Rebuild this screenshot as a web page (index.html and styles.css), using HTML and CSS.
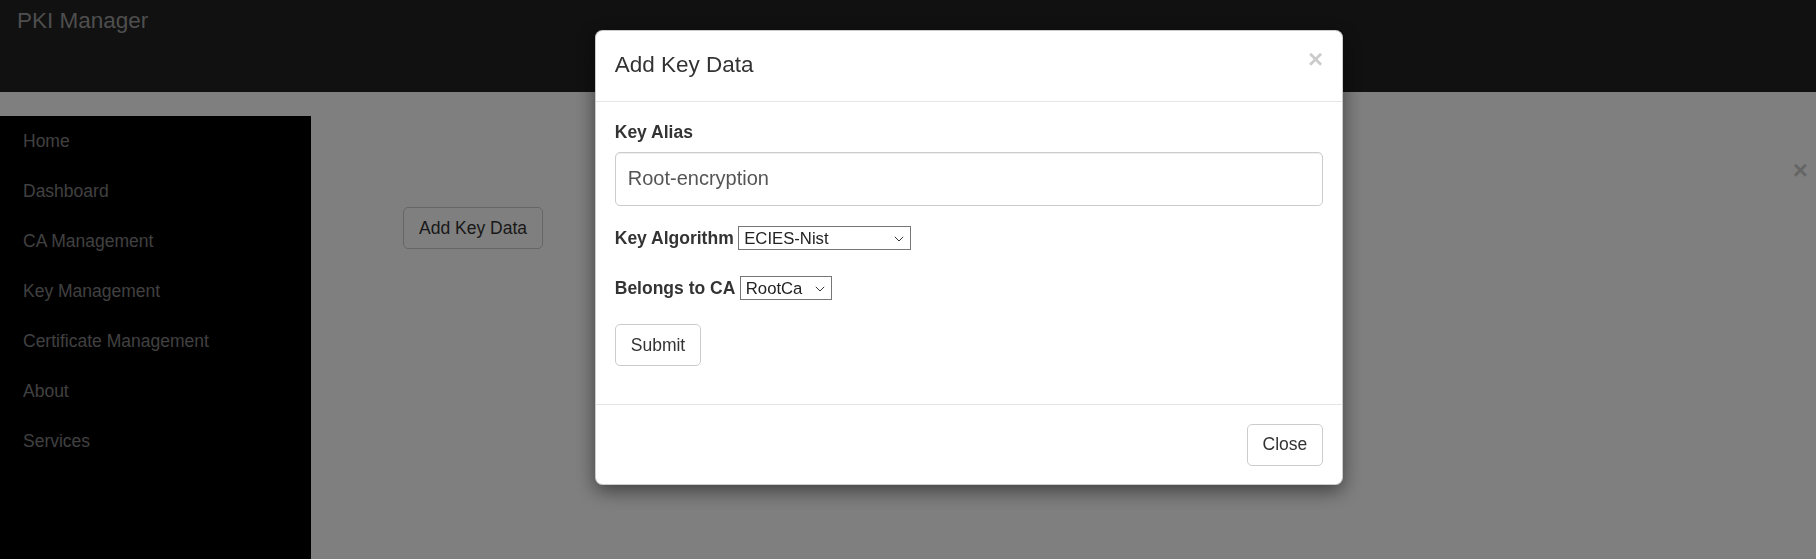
FILE: index.html
```html
<!DOCTYPE html>
<html lang="en">
<head>
<meta charset="utf-8">
<title>PKI Manager</title>
<link rel="stylesheet" href="styles.css">
</head>
<body>
<header class="navbar">
  <span class="brand">PKI Manager</span>
</header>
<div class="layout">
  <nav class="sidenav">
    <a href="#">Home</a>
    <a href="#">Dashboard</a>
    <a href="#">CA Management</a>
    <a href="#">Key Management</a>
    <a href="#">Certificate Management</a>
    <a href="#">About</a>
    <a href="#">Services</a>
  </nav>
  <main class="main">
    <button class="btn page-btn" type="button">Add Key Data</button>
    <span class="close page-close">&times;</span>
  </main>
</div>

<div class="backdrop"></div>

<div class="modal">
  <div class="modal-header">
    <h4 class="modal-title">Add Key Data</h4>
    <span class="close">&times;</span>
  </div>
  <div class="modal-body">
    <form>
      <div class="form-group">
        <label class="block-label">Key Alias</label>
        <input class="form-control" type="text" value="Root-encryption">
      </div>
      <div class="form-group inline-group">
        <label>Key Algorithm</label>
        <span class="sel-wrap sel-alg">
          <select class="sel"><option>ECIES-Nist</option><option>RSA</option></select>
          <svg class="chev" width="10" height="6" viewBox="0 0 10 6"><path d="M0.8 0.8 L5 5 L9.2 0.8" fill="none" stroke="#333" stroke-width="1"/></svg>
        </span>
      </div>
      <div class="form-group inline-group">
        <label>Belongs to CA</label>
        <span class="sel-wrap sel-ca">
          <select class="sel"><option>RootCa</option></select>
          <svg class="chev" width="10" height="6" viewBox="0 0 10 6"><path d="M0.8 0.8 L5 5 L9.2 0.8" fill="none" stroke="#333" stroke-width="1"/></svg>
        </span>
      </div>
      <div class="form-group">
        <button class="btn" type="button">Submit</button>
      </div>
    </form>
  </div>
  <div class="modal-footer">
    <button class="btn" type="button">Close</button>
  </div>
</div>
</body>
</html>
```
FILE: styles.css
```css
html, body {
  margin: 0;
  padding: 0;
  height: 100%;
}
body {
  font-family: "Liberation Sans", Arial, sans-serif;
  font-size: 17.5px;
  line-height: 25px;
  color: #333;
  background: #fff;
  overflow: hidden;
}
.navbar {
  height: 92px;
  background: #222;
  box-sizing: border-box;
}
.brand {
  display: block;
  padding: 8px 17px;
  font-size: 22.5px;
  line-height: 25px;
  color: #9d9d9d;
}
.layout {
  display: flex;
  margin-top: 24px;
  height: calc(100% - 116px);
}
.sidenav {
  width: 311px;
  background: #000;
  display: flex;
  flex-direction: column;
}
.sidenav a {
  display: block;
  padding: 12.5px 23px;
  color: #818181;
  text-decoration: none;
  font-size: 17.5px;
  line-height: 25px;
}
.main {
  flex: 1;
  position: relative;
}
.btn {
  font-family: inherit;
  font-size: 17.5px;
  line-height: 25px;
  padding: 7.5px 15px;
  background: #fff;
  color: #333;
  border: 1px solid #ccc;
  border-radius: 5px;
  cursor: pointer;
}
.page-btn {
  margin-left: 92px;
  margin-top: 91px;
}
.close {
  font-size: 26px;
  font-weight: bold;
  line-height: 1;
  color: #000;
  opacity: 0.2;
  text-shadow: 0 1px 0 #fff;
}
.page-close {
  position: absolute;
  right: 8px;
  top: 41px;
}
.backdrop {
  position: fixed;
  inset: 0;
  background: #000;
  opacity: 0.5;
}
.modal {
  position: fixed;
  left: 595px;
  top: 30px;
  width: 748px;
  background: #fff;
  border: 1px solid rgba(0,0,0,.2);
  border-radius: 7.5px;
  box-shadow: 0 6px 19px rgba(0,0,0,.5);
  box-sizing: border-box;
}
.modal-header {
  display: flex;
  justify-content: space-between;
  align-items: flex-start;
  padding: 18.75px 18.75px;
  border-bottom: 1px solid #e5e5e5;
}
.modal-title {
  margin: 0;
  font-size: 22.5px;
  font-weight: 500;
  line-height: 32px;
  position: relative;
  top: -1px;
}
.modal-header .close {
  margin-top: -4px;
  margin-right: 0;
}
.modal-body {
  padding: 18.75px;
}
.modal-body form {
  margin: 0;
}
.form-group {
  margin-bottom: 18.75px;
}
label {
  font-weight: bold;
}
.block-label {
  display: block;
  margin-bottom: 6.25px;
}
.form-control {
  display: block;
  width: 100%;
  box-sizing: border-box;
  height: 54px;
  padding: 0 12px;
  font-family: inherit;
  font-size: 20px;
  color: #555;
  border: 1px solid #ccc;
  border-radius: 5px;
  box-shadow: inset 0 1px 1px rgba(0,0,0,.075);
  outline: none;
}
.inline-group {
  height: 29.25px;
  padding-top: 2px;
  display: flex;
  align-items: flex-start;
}
.inline-group label {
  margin-right: 4.5px;
}
.sel-wrap {
  position: relative;
  display: inline-block;
  height: 24px;
}
.sel {
  display: block;
  width: 100%;
  height: 24px;
  padding: 0 22px 0 5px;
  font-family: "Liberation Sans", Arial, sans-serif;
  font-size: 16.7px;
  color: #222;
  background: #fff;
  border: 1px solid #767676;
  border-radius: 0;
  appearance: none;
  -webkit-appearance: none;
  outline: none;
}
.chev {
  position: absolute;
  right: 7px;
  top: 10px;
  pointer-events: none;
}
.sel-alg {
  width: 173px;
}
.sel-ca {
  width: 92px;
}
.modal-footer {
  padding: 18.75px;
  border-top: 1px solid #e5e5e5;
  text-align: right;
}
```
